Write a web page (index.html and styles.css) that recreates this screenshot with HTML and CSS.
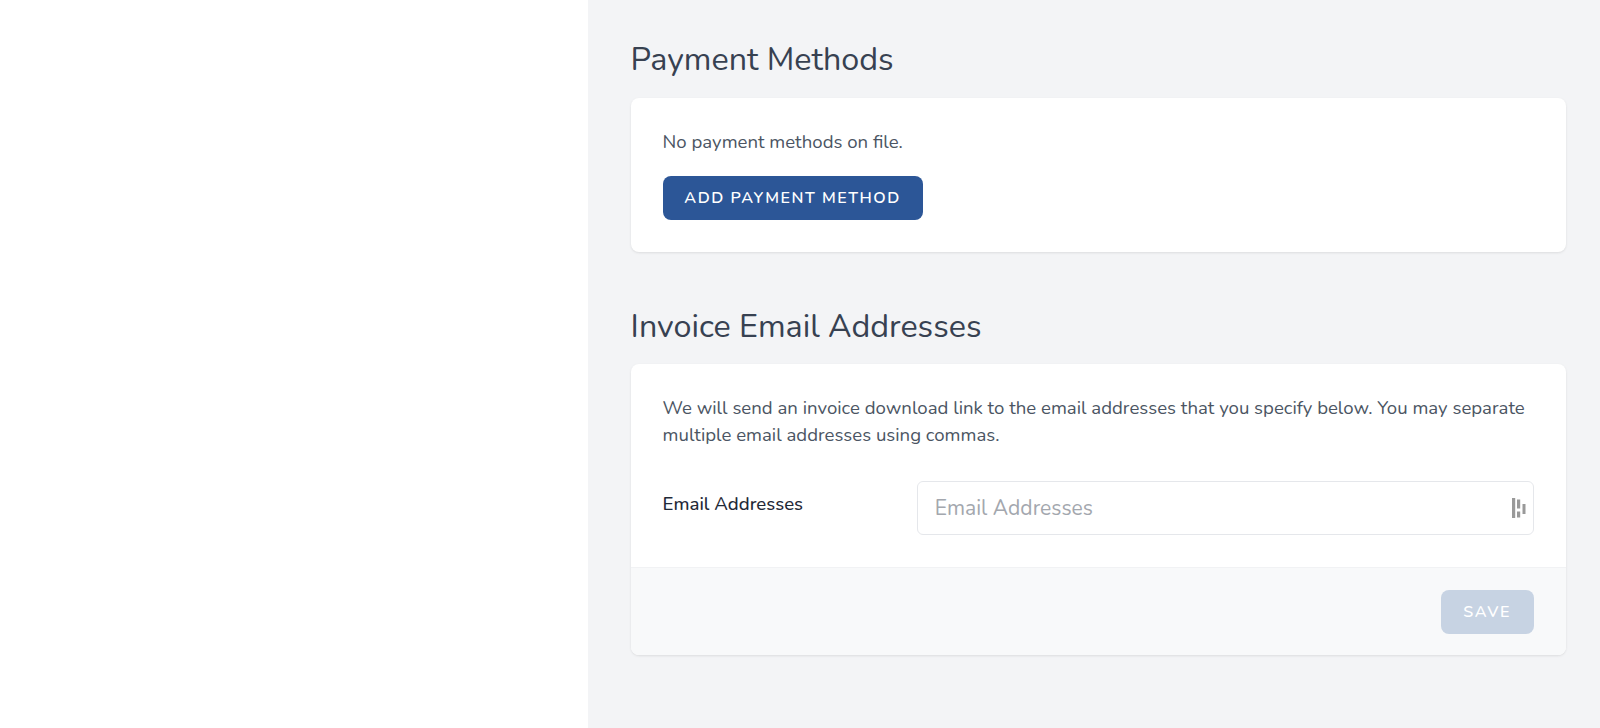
FILE: index.html
```html
<!DOCTYPE html>
<html lang="en">
<head>
<meta charset="utf-8">
<title>Billing</title>
<link rel="stylesheet" href="styles.css">
</head>
<body>
<div class="layout">
  <aside class="side"></aside>
  <main class="main">
    <h2 class="title">Payment Methods</h2>
    <section class="card">
      <div class="body">
        <p class="text">No payment methods on file.</p>
        <button class="btn btn-add">ADD PAYMENT METHOD</button>
      </div>
    </section>
    <h2 class="title title-two">Invoice Email Addresses</h2>
    <section class="card card-two">
      <div class="body">
        <p class="text">We will send an invoice download link to the email addresses that you specify below. You may separate multiple email addresses using commas.</p>
        <div class="row">
          <label class="label">Email Addresses</label>
          <div class="field">
            <span class="ph">Email Addresses</span>
            <svg class="dash" width="14" height="20" viewBox="0 0 14 20"><g fill="#999"><rect x="0" y="0" width="3.2" height="20"/><rect x="5" y="1.5" width="3.2" height="9"/><rect x="5" y="13.5" width="3.2" height="6"/><rect x="10.5" y="6" width="3" height="10"/></g></svg>
          </div>
        </div>
      </div>
      <div class="foot"><button class="btn btn-save">SAVE</button></div>
    </section>
  </main>
</div>
</body>
</html>
```
FILE: styles.css
```css
* { box-sizing: border-box; }
html, body { margin: 0; height: 100%; }
body { font-family: "Nunito", "Noto Sans", "Open Sans", sans-serif; background: #f3f4f6; overflow: hidden; }
.layout { display: flex; height: 728px; }
.side { width: 588px; background: #fff; flex: none; }
.main { flex: 1; padding: 39px 34.4px 0 42.6px; }
.title { margin: 0; font-size: 32.3px; line-height: 40px; font-weight: 400; color: #374151; }
.title-two { margin-top: 54px; }
.card { margin-top: 19px; background: #fff; border-radius: 8px; box-shadow: 0 1px 3px rgba(0,0,0,.07), 0 1px 2px rgba(0,0,0,.03); overflow: hidden; }
.card-two { margin-top: 18px; }
.body { padding: 31px 32px 32px 32px; }
.text { margin: 0; font-size: 18.6px; line-height: 26.4px; color: #4b5563; }
.btn { border: 0; border-radius: 8px; color: #fff; font-family: inherit; font-size: 16px; font-weight: 600; letter-spacing: 1.55px; height: 44px; padding: 0; }
.btn-add { display: block; margin-top: 21px; width: 260px; background: #2c5697; }
.row { display: flex; margin-top: 33px; }
.label { width: 254.6px; font-size: 18.6px; font-weight: 550; color: #1f2937; padding-top: 11px; line-height: 24px; }
.field { flex: 1; height: 54px; border: 1px solid #e5e7eb; border-radius: 6px; display: flex; align-items: center; justify-content: space-between; padding: 0 7px 0 16.5px; background: #fff; }
.ph { font-size: 21.1px; color: #a3a7ae; }
.foot { background: #f8f9fa; border-top: 1px solid #f1f2f4; padding: 21.5px 32px; display: flex; justify-content: flex-end; }
.btn-save { width: 93px; background: #c7d3e3; }
```
